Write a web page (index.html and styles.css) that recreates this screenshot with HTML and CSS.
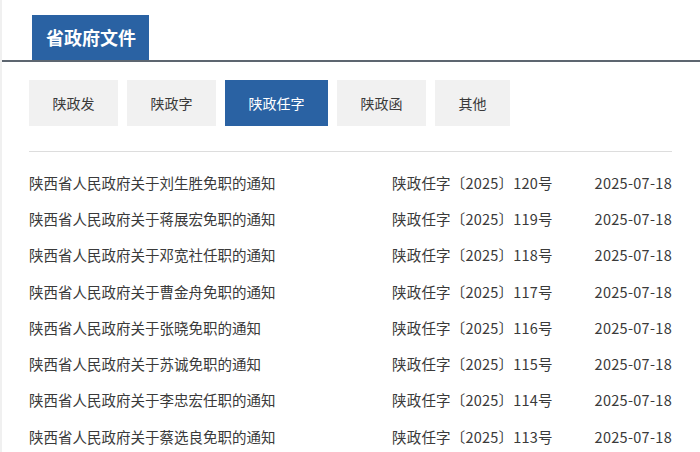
FILE: index.html
```html
<!DOCTYPE html>
<html lang="zh-CN">
<head>
  <meta charset="UTF-8" />
  <title>省政府文件</title>
  <link rel="stylesheet" href="styles.css">
</head>
<body>
  <div class="panel">
    <!-- header tab -->
    <div class="panel-head">
      <span class="panel-title">省政府文件</span>
    </div>

    <div class="tabs">
      <a class="tab" href="#">陕政发</a>
      <a class="tab" href="#">陕政字</a>
      <a class="tab active" href="#">陕政任字</a>
      <a class="tab" href="#">陕政函</a>
      <a class="tab" href="#">其他</a>
    </div>

    <ul class="doc-list">
      <li><span class="doc-title">陕西省人民政府关于刘生胜免职的通知</span><span class="doc-no">陕政任字〔2025〕120号</span><span class="doc-date">2025-07-18</span></li>
      <li><span class="doc-title">陕西省人民政府关于蒋展宏免职的通知</span><span class="doc-no">陕政任字〔2025〕119号</span><span class="doc-date">2025-07-18</span></li>
      <li><span class="doc-title">陕西省人民政府关于邓宽社任职的通知</span><span class="doc-no">陕政任字〔2025〕118号</span><span class="doc-date">2025-07-18</span></li>
      <li><span class="doc-title">陕西省人民政府关于曹金舟免职的通知</span><span class="doc-no">陕政任字〔2025〕117号</span><span class="doc-date">2025-07-18</span></li>
      <li><span class="doc-title">陕西省人民政府关于张晓免职的通知</span><span class="doc-no">陕政任字〔2025〕116号</span><span class="doc-date">2025-07-18</span></li>
      <li><span class="doc-title">陕西省人民政府关于苏诚免职的通知</span><span class="doc-no">陕政任字〔2025〕115号</span><span class="doc-date">2025-07-18</span></li>
      <li><span class="doc-title">陕西省人民政府关于李忠宏任职的通知</span><span class="doc-no">陕政任字〔2025〕114号</span><span class="doc-date">2025-07-18</span></li>
      <li><span class="doc-title">陕西省人民政府关于蔡选良免职的通知</span><span class="doc-no">陕政任字〔2025〕113号</span><span class="doc-date">2025-07-18</span></li>
    </ul>
  </div>
</body>
</html>
```

FILE: styles.css
```css
body {
  margin: 0;
  font-family: "Noto Sans CJK SC", "Liberation Sans", sans-serif;
  background-color: #fff;
  color: #3a3a3a;
}

.panel {
  border-left: 2px solid #f0f0f0;
  height: 452px;
  overflow: hidden;
}

.panel-head {
  padding: 15px 0 0 30px;
  border-bottom: 2px solid #5d6670;
}

.panel-title {
  display: inline-block;
  background-color: #2a62a3;
  color: #fff;
  font-size: 18px;
  font-weight: bold;
  line-height: 45px;
  padding: 0 13px 0 14px;
}

.tabs {
  display: flex;
  gap: 9px;
  margin: 18px 28px 0 27px;
  padding-bottom: 25px;
  border-bottom: 1px solid #ddd;
}

.tab {
  background-color: #f1f1f1;
  color: #3a3a3a;
  font-size: 14px;
  line-height: 46px;
  padding: 0 23.5px;
  text-decoration: none;
}

.tab.active {
  background-color: #2a62a3;
  color: #fff;
}

.doc-list {
  list-style: none;
  margin: 12px 28px 0 27px;
  padding: 0;
  font-size: 14.5px;
}

.doc-list li {
  display: flex;
  height: 36.3px;
  align-items: center;
  white-space: nowrap;
}

.doc-title {
  flex: 1;
}

.doc-no {
  flex: none;
  width: 200px;
  letter-spacing: 0.2px;
}

.doc-date {
  flex: none;
  width: 80px;
  text-align: right;
  letter-spacing: 0.3px;
}
```
